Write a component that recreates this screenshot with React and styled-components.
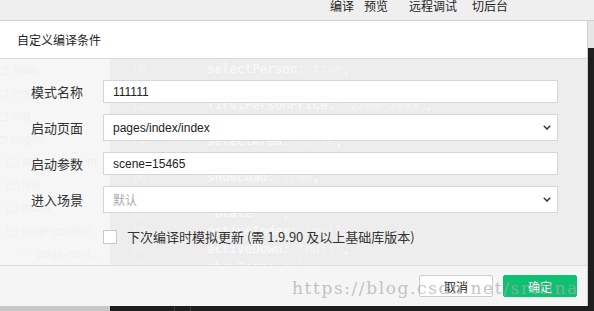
import React from "react"
import styled, { createGlobalStyle } from "styled-components"

const GlobalStyle = createGlobalStyle`
html, body {
    margin: 0;
    padding: 0;
    overflow: hidden;
    background: #efefef;
}
body {
    font-family: "Liberation Sans", "Noto Sans CJK SC", sans-serif;
}
`

const menu = [
    { text: "编译", gap: 0 },
    { text: "预览", gap: 10 },
    { text: "远程调试", gap: 21 },
    { text: "切后台", gap: 15 },
]

const tree = [
    { name: ".idea", level: 0, kind: "folder" },
    { name: "image", level: 0, kind: "folder" },
    { name: "img", level: 0, kind: "folder" },
    { name: "pages", level: 0, kind: "open" },
    { name: "article-content", level: 1, kind: "folder" },
    { name: "first", level: 1, kind: "folder" },
    { name: "index", level: 1, kind: "folder" },
    { name: "page-content", level: 1, kind: "open" },
    { name: "page-cont...", level: 2, kind: "js" },
]

const code = [
    [10, "selectPerson: ", "true", ","],
    [11, "firstPerson: ", "'请选择'", ","],
    [12, "firstPersonPrice: ", "'2299-3999'", ","],
    [13, "selectArea: ", "false", ","],
    [14, "selectArea: ", "false", ","],
    [15, "areaText: ", "''", ","],
    [16, "showLoad: ", "true", ","],
    [17, "chooseType: ", "''", ","],
    [18, "rotate: ", "''", ","],
    [19, "activeIndex: ", "'null'", ","],
    [20, "activeDown: ", "'null'", ","],
    [21, "showZoom: ", "false", ","],
]

const FolderIcon = ({ open }) => (
    <svg width="12" height="10" viewBox="0 0 12 10">
        <path
            d={open ? "M0.5 1.5h4l1 1h5.5v1.5M0.5 1.5v8h9l2-5.5h-9l-2 5.5" : "M0.5 1.5h4l1 1h6v7h-11z"}
            fill="none"
            stroke="#666"
        />
    </svg>
)

const Chevron = () => (
    <svg width="8" height="5" viewBox="0 0 8 5">
        <path d="M0.8 0.8L4 4L7.2 0.8" fill="none" stroke="#333" strokeWidth="1.5" />
    </svg>
)

export default function App() {
    return (
        <>
            <GlobalStyle />
            <Page>
                <TopBar>
                    {menu.map((m) => (
                        <MenuItem key={m.text} $gap={m.gap}>{m.text}</MenuItem>
                    ))}
                </TopBar>
                <Workspace>
                    <EditorToolbar />
                    <EditorBody>
                        <Tree>
                            {tree.map((t) => (
                                <TreeItem key={t.name} $level={t.level}>
                                    {t.kind === "js" ? <JsMark>JS</JsMark> : <FolderIcon open={t.kind === "open"} />}
                                    <span>{t.name}</span>
                                </TreeItem>
                            ))}
                        </Tree>
                        <Gutter>
                            {code.map((c) => (
                                <LineNo key={c[0]}>{c[0]}</LineNo>
                            ))}
                        </Gutter>
                        <Divider />
                        <Code>
                            {code.map((c) => (
                                <CodeLine key={c[0]}>
                                    {c[1]}
                                    <CodeValue $str={c[2].startsWith("'")}>{c[2]}</CodeValue>
                                    {c[3]}
                                </CodeLine>
                            ))}
                        </Code>
                    </EditorBody>

                    <Dialog>
                        <DialogHeader>自定义编译条件</DialogHeader>
                        <DialogBody>
                            <FormRow>
                                <Label>模式名称</Label>
                                <Field>111111</Field>
                            </FormRow>
                            <FormRow>
                                <Label>启动页面</Label>
                                <Field $select>
                                    <span>pages/index/index</span>
                                    <Chevron />
                                </Field>
                            </FormRow>
                            <FormRow>
                                <Label>启动参数</Label>
                                <Field>scene=15465</Field>
                            </FormRow>
                            <FormRow>
                                <Label>进入场景</Label>
                                <Field $select $placeholder>
                                    <span>默认</span>
                                    <Chevron />
                                </Field>
                            </FormRow>
                            <CheckRow>
                                <Checkbox />
                                <CheckText>下次编译时模拟更新 (需 1.9.90 及以上基础库版本)</CheckText>
                            </CheckRow>
                        </DialogBody>
                        <DialogFooter>
                            <Button>取消</Button>
                            <Button $primary>确定</Button>
                        </DialogFooter>
                    </Dialog>

                    <Watermark>https://blog.csdn.net/srttina</Watermark>
                </Workspace>
            </Page>
        </>
    )
}

// CSS Components

const Page = styled.div`
width: 594px;
height: 311px;
overflow: hidden;
display: flex;
flex-direction: column;
`

const TopBar = styled.div`
height: 20px;
flex-shrink: 0;
background: #efefef;
border-bottom: 1px solid #cfcfcf;
display: flex;
justify-content: flex-end;
align-items: flex-start;
padding-right: 86px;
`

const MenuItem = styled.div`
margin-left: ${(p) => p.$gap}px;
margin-top: -1px;
font-family: "Noto Sans CJK SC", sans-serif;
font-size: 12px;
line-height: 13px;
color: #1e1e1e;
`

const Workspace = styled.div`
position: relative;
flex: 1;
display: flex;
flex-direction: column;
background: #1e1e1e;
`

const EditorToolbar = styled.div`
height: 27px;
flex-shrink: 0;
background: #e6e6e6;
`

const EditorBody = styled.div`
flex: 1;
display: flex;
`

const Tree = styled.div`
width: 110px;
flex-shrink: 0;
background: #c8c8c8;
padding-top: 10px;
box-sizing: border-box;
overflow: hidden;
`

const TreeItem = styled.div`
height: 23px;
display: flex;
align-items: center;
gap: 3px;
margin-left: ${(p) => p.$level * 11 - 4}px;
font-size: 12px;
color: #444;
white-space: nowrap;
`

const JsMark = styled.span`
font-size: 9px;
font-weight: bold;
color: #c9a400;
width: 16px;
text-align: center;
`

const Gutter = styled.div`
width: 65px;
flex-shrink: 0;
padding: 12px 28px 0 0;
box-sizing: border-box;
background: #1e1e1e;
border-right: 1px solid #3a3a3a;
`

const LineNo = styled.div`
height: 18px;
line-height: 18px;
text-align: right;
font-family: "DejaVu Sans Mono", monospace;
font-size: 12.5px;
color: #858585;
`

const Divider = styled.div`
width: 15px;
flex-shrink: 0;
border-right: 1px solid #3a3a3a;
`

const Code = styled.div`
flex: 1;
padding: 12px 0 0 16px;
overflow: hidden;
`

const CodeLine = styled.div`
height: 18px;
line-height: 18px;
font-family: "DejaVu Sans Mono", monospace;
font-size: 12.5px;
color: #ffffff;
white-space: pre;
`

const CodeValue = styled.span`
color: ${(p) => (p.$str ? "#ce9178" : "#569cd6")};
`

const Dialog = styled.div`
position: absolute;
top: 0;
left: 0;
width: 588px;
height: 285px;
box-sizing: border-box;
border-right: 1px solid #cdcdcd;
display: flex;
flex-direction: column;
font-family: "Noto Sans CJK SC", sans-serif;
`

const DialogHeader = styled.div`
height: 38px;
flex-shrink: 0;
box-sizing: border-box;
background: #ffffff;
border-bottom: 1px solid #dadada;
padding-left: 17px;
display: flex;
align-items: center;
font-size: 12px;
color: #222;
`

const DialogBody = styled.div`
flex: 1;
background: rgba(249, 249, 249, 0.95);
padding: 21px 29px 0 0;
display: flex;
flex-direction: column;
gap: 11px;
`

const FormRow = styled.div`
display: flex;
align-items: center;
gap: 20px;
`

const Label = styled.div`
width: 83px;
text-align: right;
font-size: 13px;
color: #333;
`

const Field = styled.div`
flex: 1;
height: ${(p) => (p.$select ? 27 : 23)}px;
box-sizing: border-box;
background: #ffffff;
border: 1px solid #d6d6d6;
padding: 0 6px 0 9px;
display: flex;
align-items: center;
justify-content: space-between;
font-family: ${(p) => (p.$placeholder ? `"Noto Sans CJK SC", sans-serif` : `"Liberation Sans", sans-serif`)};
font-size: 12px;
color: ${(p) => (p.$placeholder ? "#aaaaaa" : "#222")};
`

const CheckRow = styled.div`
display: flex;
align-items: center;
gap: 10px;
margin-top: 3px;
padding-left: 103px;
`

const Checkbox = styled.div`
width: 14px;
height: 14px;
box-sizing: border-box;
background: #ffffff;
border: 1px solid #c8c8c8;
`

const CheckText = styled.div`
font-size: 13px;
color: #333;
`

const DialogFooter = styled.div`
height: 41px;
flex-shrink: 0;
box-sizing: border-box;
background: #f5f5f5;
border-top: 1px solid #dedede;
display: flex;
justify-content: flex-end;
align-items: center;
gap: 10px;
padding-right: 10px;
`

const Button = styled.div`
width: 74px;
height: 22px;
box-sizing: border-box;
border-radius: 2px;
display: flex;
align-items: center;
justify-content: center;
font-size: 12px;
background: ${(p) => (p.$primary ? "#0ec071" : "#ffffff")};
border: 1px solid ${(p) => (p.$primary ? "#0ec071" : "#cccccc")};
color: ${(p) => (p.$primary ? "#ffffff" : "#222")};
`

const Watermark = styled.div`
position: absolute;
left: 292px;
top: 257px;
font-family: "DejaVu Serif", serif;
font-size: 17px;
letter-spacing: 1.6px;
color: rgba(170, 170, 170, 0.7);
pointer-events: none;
white-space: nowrap;
`
